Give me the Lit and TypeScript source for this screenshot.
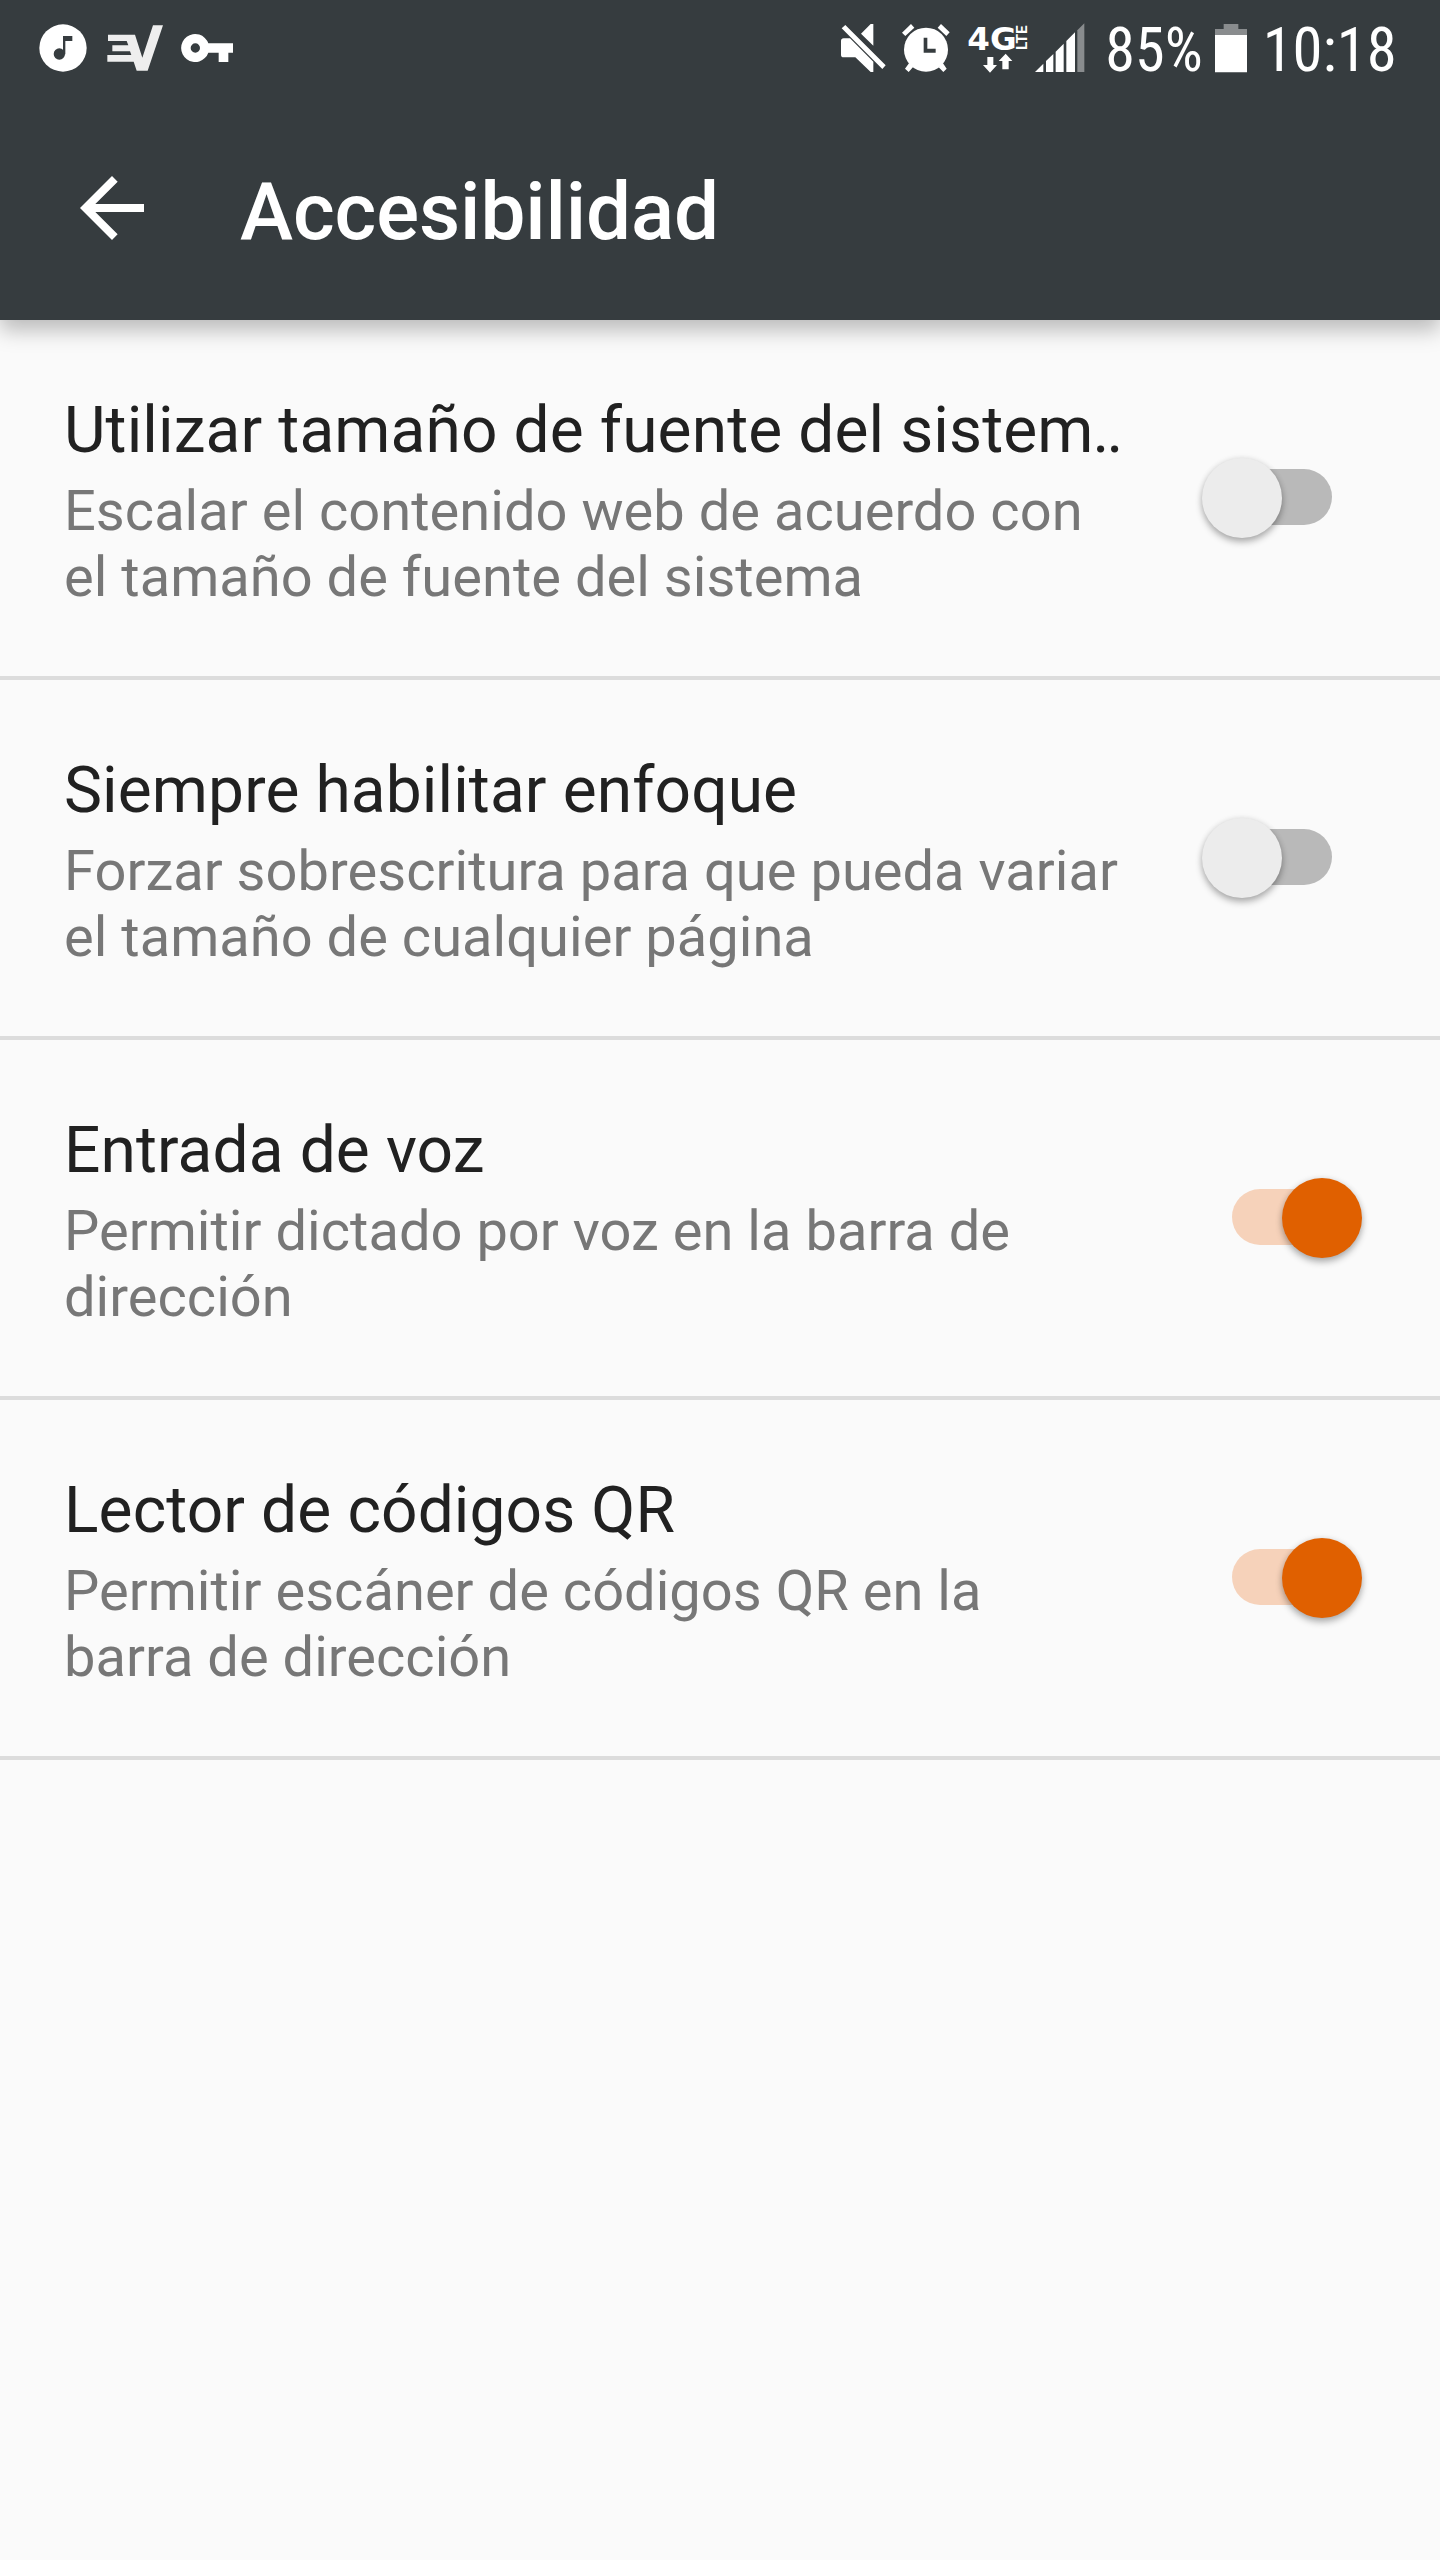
import { LitElement, html, css } from "lit";
import { customElement, property } from "lit/decorators.js";

@customElement("status-bar")
class StatusBar extends LitElement {
  static styles = css`
    :host { display: flex; justify-content: space-between; height: 96px; padding: 0 40px 0 39px; box-sizing: border-box; }
    .group { display: flex; height: 96px; }
    svg { display: block; height: 96px; flex: none; fill: #fff; overflow: visible; }
    .music { width: 48px; margin-right: 20px; }
    .vpn { width: 57px; margin-right: 16px; fill: #eee; }
    .key { width: 54px; }
    .mute { width: 46px; margin-right: 16px; }
    .alarm { width: 48px; margin-right: 18px; }
    .network { width: 60px; margin-right: 7px; }
    .signal { width: 50px; margin-right: 21px; }
    .percent { width: 96px; margin-right: 13px; }
    .battery { width: 32px; margin-right: 18px; }
    .clock { width: 135px; }
    .faded { fill: #898c8e; }
    .dark { fill: #363c3f; }
    .label { font-family: "Roboto Condensed", Roboto, sans-serif; font-size: 183px; }
    .badge { font-family: "DejaVu Sans", sans-serif; font-weight: 700; }
    .lte { font-family: Roboto, sans-serif; font-weight: 700; }
  `;

  render() {
    return html`
      <div class="group">
        <svg class="music" viewBox="57 0 144 288">
          <circle cx="129" cy="144" r="71" />
          <g class="dark"><circle cx="118" cy="162" r="17" /><path d="M129 108H157V123H136V163H129Z" /></g>
        </svg>
        <svg class="vpn" viewBox="261 0 171 288">
          <path d="M399 76H429L383 212H350L341 185H262V165H334L330 154H277V136H325L320 123H264V104H345L367 173Z" />
        </svg>
        <svg class="key" viewBox="480 0 162 288">
          <path fill-rule="evenodd" d="M565 130H639V158H625V186H596V158H565A42 42 0 1 1 565 130ZM526 130A14 14 0 1 0 526 158A14 14 0 1 0 526 130Z" />
        </svg>
      </div>
      <div class="group">
        <svg class="mute" viewBox="60 0 138 288">
          <path d="M76 75L197 196L187 207L65 85ZM160 72V137L123 101L152 72ZM71 115H90L160 185V216H152L106 172H71Q63 172 63 164V123Q63 115 71 115Z" />
        </svg>
        <svg class="alarm" viewBox="248 0 144 288">
          <path d="M275 72L285 83L258 108L248 98ZM365 72L391 97L381 108L355 83ZM270 188L282 200L268 216L257 206ZM370 188L382 206L372 216L358 202Z" />
          <circle cx="320" cy="149" r="66" />
          <path class="dark" d="M313 113H324V146H349V158H313Z" />
        </svg>
        <svg class="network" viewBox="446 0 180 288">
          <text class="badge" x="444" y="149" font-size="98" textLength="148" lengthAdjust="spacingAndGlyphs">4G</text>
          <text class="lte" transform="translate(624 150) rotate(-90)" font-size="42" textLength="74" lengthAdjust="spacingAndGlyphs">LTE</text>
          <path d="M504 171H522V195H533L512 218L491 195H504ZM559 161L579 183H568V208H549V183H538Z" />
        </svg>
        <svg class="signal" viewBox="647 0 150 288">
          <path d="M647 216L672 191V216ZM680 183L702 162V216H680ZM709 155L733 131V216H709ZM741 123L767 97V216H741Z" />
          <path class="faded" d="M774 91L795 70V216H774Z" />
        </svg>
        <svg class="percent" viewBox="78 0 288 288">
          <text class="label" x="76" y="214" textLength="292" lengthAdjust="spacingAndGlyphs">85%</text>
        </svg>
        <svg class="battery" viewBox="405 0 96 288">
          <path class="faded" d="M405 87H431V72H475V87H501V106H405Z" />
          <path d="M405 105H501V217H405Z" />
        </svg>
        <svg class="clock" viewBox="555 0 405 288">
          <text class="label" x="548" y="214" textLength="402" lengthAdjust="spacingAndGlyphs">10:18</text>
        </svg>
      </div>
    `;
  }
}

@customElement("toggle-switch")
class ToggleSwitch extends LitElement {
  @property({ type: Boolean, reflect: true }) on = false;
  static styles = css`
    :host { display: grid; width: 160px; height: 80px; align-items: center; }
    .track, .knob { grid-area: 1 / 1; }
    .track { width: 100px; height: 56px; margin: 0 0 2px 30px; border-radius: 28px; background: #b9b9b9; }
    .knob { width: 80px; height: 80px; border-radius: 50%; background: #ececec; box-shadow: 0 4px 7px rgba(0, 0, 0, .3), 0 0 6px rgba(0, 0, 0, .08); }
    :host([on]) .track { background: #f6d2ba; }
    :host([on]) .knob { background: #e06000; margin-left: 80px; }
  `;
  render() {
    return html`<div class="track"></div><div class="knob"></div>`;
  }
}

interface Setting { title: string; clipped?: boolean; lines: string[]; on: boolean; }

const SETTINGS: Setting[] = [
  { title: "Utilizar tamaño de fuente del sistem", clipped: true, lines: ["Escalar el contenido web de acuerdo con", "el tamaño de fuente del sistema"], on: false },
  { title: "Siempre habilitar enfoque", lines: ["Forzar sobrescritura para que pueda variar", "el tamaño de cualquier página"], on: false },
  { title: "Entrada de voz", lines: ["Permitir dictado por voz en la barra de", "dirección"], on: true },
  { title: "Lector de códigos QR", lines: ["Permitir escáner de códigos QR en la", "barra de dirección"], on: true },
];

@customElement("app-root")
class AppRoot extends LitElement {
  static styles = css`
    :host { display: block; width: 1440px; min-height: 2560px; background: #fafafa; font-family: Roboto, sans-serif; }
    .header { height: 320px; background: #363c3f; box-shadow: 0 10px 20px rgba(0, 0, 0, .26); }
    .toolbar { display: flex; align-items: center; height: 224px; padding-left: 64px; box-sizing: border-box; }
    .back { width: 96px; height: 96px; fill: #fff; margin-right: 80px; }
    .heading { margin: 0; font-size: 80px; line-height: 96px; font-weight: 500; letter-spacing: -0.1px; color: #fff; white-space: nowrap; padding-top: 7px; }
    .row { display: flex; height: 360px; box-sizing: border-box; border-bottom: 4px solid #dcdcdc; padding: 72px 78px 0 64px; justify-content: space-between; }
    .title { font-size: 64px; line-height: 78px; letter-spacing: 0.12px; color: #212121; white-space: nowrap; }
    .dots { letter-spacing: -2.8px; margin-left: -1px; }
    .desc { font-size: 56px; line-height: 66px; letter-spacing: 0.03px; color: #777; white-space: nowrap; margin-top: 8px; }
    .switch { margin-top: 66px; }
  `;
  render() {
    return html`
      <header class="header">
        <status-bar></status-bar>
        <div class="toolbar">
          <svg class="back" viewBox="0 0 24 24"><path d="M20 11H7.83l5.59-5.59L12 4l-8 8 8 8 1.41-1.41L7.83 13H20v-2z" /></svg>
          <h1 class="heading">Accesibilidad</h1>
        </div>
      </header>
      <main>
        ${SETTINGS.map((s) => html`
          <section class="row">
            <div>
              <div class="title">${s.title}${s.clipped ? html`<span class="dots">..</span>` : ""}</div>
              <div class="desc">${s.lines.map((l) => html`<div>${l}</div>`)}</div>
            </div>
            <toggle-switch class="switch" ?on=${s.on}></toggle-switch>
          </section>`)}
      </main>
    `;
  }
}
